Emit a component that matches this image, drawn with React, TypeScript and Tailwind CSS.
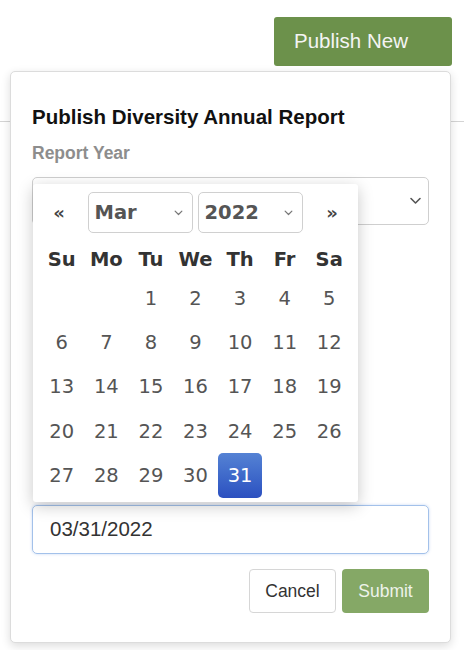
import React from 'react';

const dayNames = ['Su', 'Mo', 'Tu', 'We', 'Th', 'Fr', 'Sa'];

function buildDays() {
  const cells: (number | null)[] = [null, null];
  for (let d = 1; d <= 31; d++) cells.push(d);
  while (cells.length % 7 !== 0) cells.push(null);
  return cells;
}

function Chevron({ className }: { className?: string }) {
  return (
    <svg className={className} viewBox="0 0 12 8" fill="none" stroke="currentColor" strokeWidth={1.6}>
      <polyline points="1.5,1.5 6,6 10.5,1.5" strokeLinecap="round" strokeLinejoin="round" />
    </svg>
  );
}

function MiniSelect({ value }: { value: string }) {
  return (
    <div className="w-[105px] h-[41px] border border-[#d0d0d0] rounded-[5px] flex items-center justify-between pl-[6px] pr-[9px] bg-white">
      <span className="text-[19.5px] font-bold text-[#555]">{value}</span>
      <Chevron className="w-[9px] h-[6px] text-[#777]" />
    </div>
  );
}

function DatePicker() {
  const days = buildDays();
  return (
    <div className="absolute left-[22px] top-[112px] w-[325px] h-[318px] bg-white rounded-[3px] shadow-[0_4px_16px_rgba(0,0,0,0.22)] font-['DejaVu_Sans',Verdana,sans-serif] px-[6.5px] pt-[8px]">
      <div className="flex items-center h-[41px]">
        <button className="w-[48px] pr-[9px] text-center text-[18px] font-bold text-[#444] leading-none">«</button>
        <MiniSelect value="Mar" />
        <div className="w-[5px]" />
        <MiniSelect value="2022" />
        <button className="flex-1 pl-[10px] text-center text-[18px] font-bold text-[#444] leading-none">»</button>
      </div>
      <div className="grid grid-cols-7 mt-[11px] h-[32px] items-center">
        {dayNames.map((d) => (
          <div key={d} className="text-center text-[19.5px] font-bold text-[#333]">
            {d}
          </div>
        ))}
      </div>
      <div className="grid grid-cols-7">
        {days.map((d, i) => (
          <div key={i} className="h-[44.4px] flex items-center justify-center">
            {d === 31 ? (
              <div className="w-[44px] h-[45px] rounded-[5px] bg-gradient-to-b from-[#5582d4] to-[#2c50c0] text-white text-[19.5px] flex items-center justify-center">
                31
              </div>
            ) : (
              <span className="text-[19.5px] text-[#555]">{d ?? ''}</span>
            )}
          </div>
        ))}
      </div>
    </div>
  );
}

export default function App() {
  return (
    <div className="relative w-[464px] h-[650px] bg-white overflow-hidden font-['Liberation_Sans',Arial,sans-serif]">
      <div className="h-[122px] border-b border-[#d4d4d4] flex justify-end pt-[17px] pr-[12px]">
        <button className="w-[178px] h-[49px] bg-[#6c914b] rounded-[3px] text-left pl-[20px] text-[20.5px] text-[#f4f4f4]">
          Publish New
        </button>
      </div>

      <div className="absolute left-[10px] top-[71px] w-[441px] h-[572px] bg-white rounded-[5px] border border-[#dcdcdc] shadow-[0_3px_10px_rgba(0,0,0,0.14)] pt-[33px] pl-[21px] pr-[21px]">
        <h2 className="text-[20.5px] leading-[24px] font-bold text-[#111]">Publish Diversity Annual Report</h2>
        <div className="mt-[14px] text-[17.5px] leading-[20px] font-bold text-[#8d8d8d]">Report Year</div>
        <div className="mt-[14px] h-[48px] border border-[#cfcfcf] rounded-[5px] flex items-center justify-end pr-[6px]">
          <Chevron className="w-[13px] h-[8px] text-[#555]" />
        </div>

        <div className="mt-[280px] h-[49px] border border-[#a3c1ea] rounded-[5px] shadow-[0_0_3px_rgba(90,140,220,0.35)] flex items-center pl-[17px] text-[20.5px] text-[#333]">
          03/31/2022
        </div>

        <div className="mt-[15px] flex justify-end gap-[6px]">
          <button className="w-[87px] h-[44px] border border-[#d6d6d6] rounded-[4px] bg-white text-[17.5px] text-[#333]">
            Cancel
          </button>
          <button className="w-[87px] h-[44px] rounded-[4px] bg-[#85a866] text-[17.5px] text-[#eef3ea]">
            Submit
          </button>
        </div>

        <DatePicker />
      </div>
    </div>
  );
}
